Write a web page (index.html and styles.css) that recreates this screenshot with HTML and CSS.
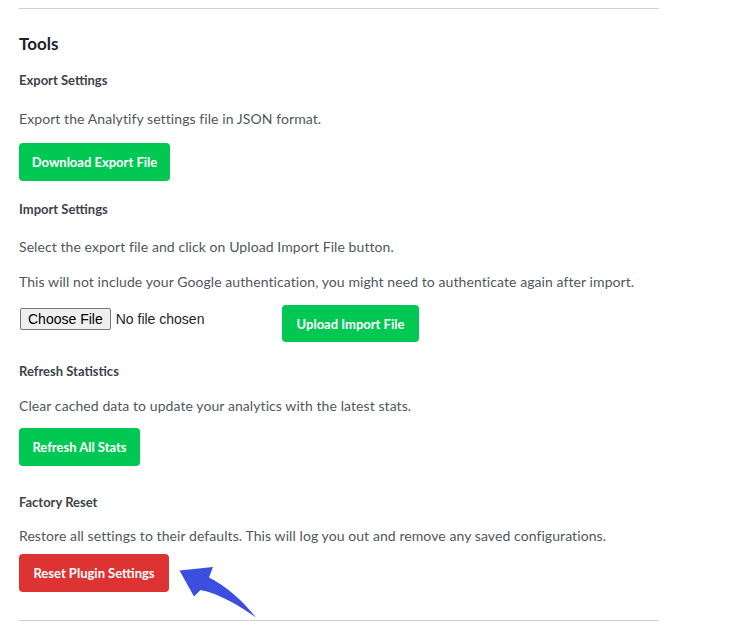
FILE: index.html
```html
<!DOCTYPE html>
<html lang="en">
<head>
<meta charset="utf-8">
<title>Tools</title>
<link rel="stylesheet" href="styles.css">
</head>
<body>
<div class="panel">
  <h2 class="title">Tools</h2>

  <section class="tool">
    <h3 class="tool-name">Export Settings</h3>
    <p class="desc desc-export">Export the Analytify settings file in JSON format.</p>
    <button class="btn btn-green btn-export">Download Export File</button>
  </section>

  <section class="tool">
    <h3 class="tool-name">Import Settings</h3>
    <p class="desc desc-import">Select the export file and click on Upload Import File button.</p>
    <p class="desc desc-2">This will not include your Google authentication, you might need to authenticate again after import.</p>
    <div class="import-row">
      <input class="file" type="file">
      <button class="btn btn-green btn-upload">Upload Import File</button>
    </div>
  </section>

  <section class="tool tool-refresh">
    <h3 class="tool-name">Refresh Statistics</h3>
    <p class="desc desc-refresh">Clear cached data to update your analytics with the latest stats.</p>
    <button class="btn btn-green btn-refresh">Refresh All Stats</button>
  </section>

  <section class="tool tool-last">
    <h3 class="tool-name">Factory Reset</h3>
    <p class="desc desc-reset">Restore all settings to their defaults. This will log you out and remove any saved configurations.</p>
    <button class="btn btn-red">Reset Plugin Settings</button>
  </section>
</div>

<svg class="pointer" width="738" height="631" viewBox="0 0 738 631" aria-hidden="true">
  <path d="M179.5,570.5 L213,567 L209,577.5 C226,586 243,601 256,617.5 C240,606 220,594 200.5,590 L194,596.5 Z" fill="#3b4ee0"/>
</svg>
</body>
</html>
```

FILE: styles.css
```css
html, body {
  margin: 0;
  padding: 0;
  background: #ffffff;
}

body {
  font-family: "Lato", "Noto Sans", sans-serif;
  color: #50575e;
  position: relative;
}

.panel {
  margin: 8px 0 0 19px;
  width: 640px;
  border-top: 1px solid #cfcfcf;
  border-bottom: 1px solid #cfcfcf;
  padding-bottom: 28px;
}

.title {
  margin: 23px 0 0;
  font-size: 17px;
  line-height: 24px;
  font-weight: 700;
  color: #1d2327;
}

.tool-name {
  margin: 0;
  font-size: 13px;
  line-height: 20px;
  font-weight: 700;
  color: #3c434a;
}

.tool {
  margin-top: 18px;
}

.title + .tool {
  margin-top: 14px;
}

.tool-refresh {
  margin-top: 19px;
}

.tool-last {
  margin-top: 26px;
}

.desc {
  margin: 17px 0 0;
  font-size: 14px;
  line-height: 20px;
  letter-spacing: 0.08px;
}

.desc-export {
  margin-top: 19px;
}

.desc-import {
  margin-top: 18px;
}

.desc-2 {
  margin-top: 15px;
}

.desc-refresh {
  margin-top: 15px;
}

.desc-reset {
  margin-top: 14px;
}

.btn {
  display: block;
  border: 0;
  border-radius: 4px;
  color: #ffffff;
  font-family: inherit;
  font-size: 13px;
  font-weight: 700;
  line-height: 20px;
  cursor: pointer;
}

.btn-green {
  background: #00c853;
}

.btn-red {
  background: #dd3333;
  margin-top: 8px;
  width: 150px;
  height: 38px;
}

.btn-export {
  margin-top: 14px;
  width: 151px;
  height: 38px;
}

.btn-refresh {
  margin-top: 12px;
  width: 121px;
  height: 38px;
}

.import-row {
  display: flex;
  align-items: flex-start;
  gap: 12px;
  margin-top: 13px;
}

.file {
  width: 250px;
  margin: 3px 0 0 1px;
  font-family: "Liberation Sans", Arial, sans-serif;
  font-size: 14px;
  color: #1d2327;
}

.file::file-selector-button {
  margin-right: 5px;
  padding: 2px 7px;
  border: 1px solid #767676;
  border-radius: 2px;
  background: #efefef;
  color: #000000;
  font: inherit;
}

.btn-upload {
  width: 137px;
  height: 37px;
}

.pointer {
  position: absolute;
  left: 0;
  top: 0;
  pointer-events: none;
}
```
